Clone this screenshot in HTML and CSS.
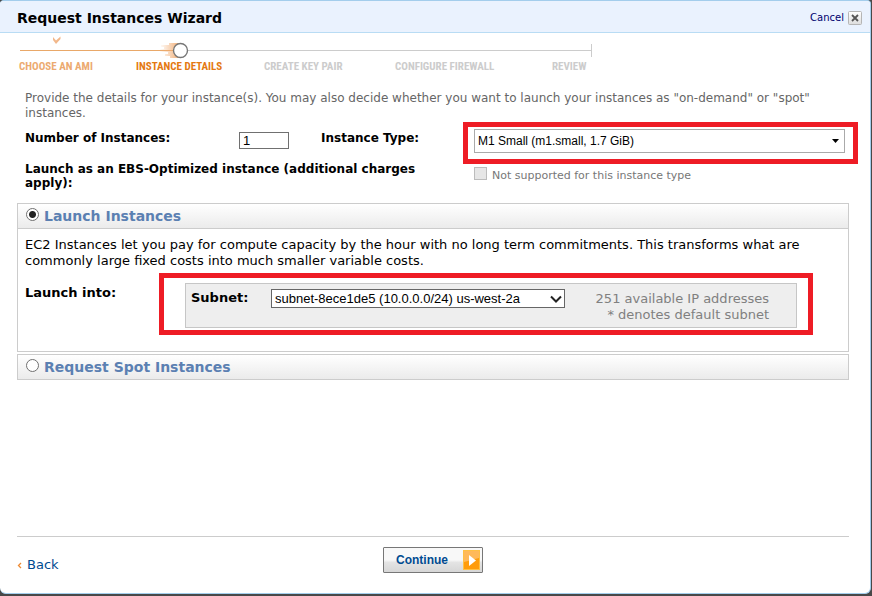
FILE: index.html
```html
<!DOCTYPE html>
<html lang="en">
<head>
<meta charset="utf-8">
<title>Request Instances Wizard</title>
<link rel="stylesheet" href="styles.css">
</head>
<body>
<form class="dialog">
  <header class="dialog-header">
    <h1>Request Instances Wizard</h1>
    <button type="button" class="cancel">Cancel
      <svg class="close-icon" width="14" height="14" viewBox="0 0 14 14" aria-hidden="true">
        <defs><linearGradient id="close-fill" x1="0" y1="0" x2="0" y2="1"><stop offset="0" stop-color="#fff"/><stop offset="1" stop-color="#ddd"/></linearGradient></defs>
        <rect x=".5" y=".5" width="13" height="13" rx="1" fill="url(#close-fill)" stroke="#b5b5b5"/>
        <path d="M4 4l6 6M10 4l-6 6" stroke="#555" stroke-width="1.8"/>
      </svg>
    </button>
  </header>

  <nav class="wizard" aria-label="Wizard steps">
    <svg class="track" width="576" height="26" viewBox="0 0 576 26" aria-hidden="true">
      <defs><linearGradient id="trail" gradientUnits="userSpaceOnUse" x1="140" y1="0" x2="162" y2="0"><stop offset="0" stop-color="#f3b27a" stop-opacity="0"/><stop offset="1" stop-color="#efa568"/></linearGradient></defs>
      <path d="M1 17.500h155" stroke="#e9a869"/>
      <path d="M161 17.500h412M572.500 11v13" stroke="#ccc"/>
      <path d="M34 4l3 3.500L41.500 3.500V6l-4.500 5-3-4z" fill="#f2b88b"/>
      <path d="M150 10h12v15h-11v-2h-5v-2h3v-2h-8v-3h4v-2h-3v-2h8z" fill="url(#trail)"/>
      <circle cx="161.500" cy="17.500" r="7" fill="#fff" stroke="#777" stroke-width="1.400"/>
    </svg>
    <ol class="steps">
      <li class="done">CHOOSE AN AMI</li>
      <li class="current" aria-current="step">INSTANCE DETAILS</li>
      <li>CREATE KEY PAIR</li>
      <li>CONFIGURE FIREWALL</li>
      <li>REVIEW</li>
    </ol>
  </nav>

  <main class="content">
    <p class="intro">Provide the details for your instance(s). You may also decide whether you want to launch your instances as "on-demand" or "spot" instances.</p>

    <div class="fields">
      <label class="label" for="count">Number of Instances:</label>
      <input class="count" id="count" type="text" value="1">
      <label class="label" for="type">Instance Type:</label>
      <div class="highlight type-highlight">
        <div class="select type-select">
          <select id="type"><option>M1 Small (m1.small, 1.7 GiB)</option></select>
          <svg width="7" height="4" viewBox="0 0 7 4" aria-hidden="true"><path d="M0 0h7L3.500 4z"/></svg>
        </div>
      </div>
      <label class="label ebs-label" for="ebs">Launch as an EBS-Optimized instance (additional charges apply):</label>
      <div class="ebs">
        <input id="ebs" type="checkbox" disabled>
        <span>Not supported for this instance type</span>
      </div>
    </div>

    <section class="panel">
      <h2><input type="radio" name="mode" id="launch" checked><label for="launch">Launch Instances</label></h2>
      <div class="panel-body">
        <p>EC2 Instances let you pay for compute capacity by the hour with no long term commitments. This transforms what are commonly large fixed costs into much smaller variable costs.</p>
        <div class="launch-into">
          <span class="label">Launch into:</span>
          <div class="highlight subnet-highlight">
            <div class="subnet">
              <label class="label" for="subnet">Subnet:</label>
              <div class="select subnet-select">
                <select id="subnet"><option>subnet-8ece1de5 (10.0.0.0/24) us-west-2a</option></select>
                <svg width="12" height="8" viewBox="0 0 12 8" aria-hidden="true"><path d="M1 1.500l5 5 5-5" fill="none" stroke="#222" stroke-width="2"/></svg>
              </div>
              <p class="note">251 available IP addresses<br>* denotes default subnet</p>
            </div>
          </div>
        </div>
      </div>
    </section>

    <section class="panel">
      <h2><input type="radio" name="mode" id="spot"><label for="spot">Request Spot Instances</label></h2>
    </section>
  </main>

  <footer class="dialog-footer">
    <a class="back" href="#"><svg width="5" height="7" viewBox="0 0 5 7" aria-hidden="true"><path d="M4 1l-2.500 2.500L4 6" fill="none" stroke="#ee8a32" stroke-width="1.300"/></svg>Back</a>
    <button type="button" class="continue">Continue
      <svg width="17" height="20" viewBox="0 0 17 20" aria-hidden="true">
        <rect width="17" height="20" fill="#ff9c0b"/>
        <path d="M1 1h15v7L1 12z" fill="#ffb95a"/>
        <rect x=".5" y=".5" width="16" height="19" fill="none" stroke="#ffc044"/>
        <path d="M6 5l7 5.500L6 16z" fill="#fff"/>
      </svg>
    </button>
  </footer>
</form>
</body>
</html>
```
FILE: styles.css
```css
* {
  box-sizing: border-box;
}

body {
  margin: 0;
  background: #484848;
  color: #000;
  font-family: Verdana, "DejaVu Sans", sans-serif;
  font-size: 12px;
  line-height: 16px;
}

h1, h2, p, ol {
  margin: 0;
  padding: 0;
}

button, input, select {
  margin: 0;
  font: inherit;
}

.dialog {
  display: flex;
  flex-direction: column;
  min-height: calc(100vh - 2px);
  margin-right: 1px;
  border: 1px solid #a3cdec;
  border-left: 0;
  border-radius: 4px 4px 6px 6px;
  background: #fff;
  overflow: hidden;
}

.dialog-header {
  display: flex;
  align-items: center;
  justify-content: space-between;
  height: 32px;
  padding: 2px 8px 0 17px;
  border-bottom: 1px solid #b9dcf4;
  background: #eaf2fe;
}

h1 {
  font-size: 14px;
}

.cancel {
  display: flex;
  align-items: center;
  gap: 4px;
  padding: 0;
  border: 0;
  background: none;
  color: #00006e;
  font-size: 10px;
}

.wizard {
  padding: 0 19px;
}

.track {
  display: block;
}

.steps {
  display: grid;
  grid-template-columns: 117px 128px 131px 157px auto;
  list-style: none;
  color: #ccc;
  font: bold 11px/16px "Roboto Condensed", "Open Sans Condensed", Roboto, sans-serif;
  white-space: nowrap;
}

.done {
  color: #ecaa70;
}

.current {
  color: #e47911;
}

.content {
  flex: 1;
  padding: 16px 12px 0 17px;
}

.intro {
  padding: 0 32px 0 8px;
  color: #666;
  line-height: 15px;
}

.label {
  font-weight: bold;
}

.fields {
  display: grid;
  grid-template-columns: 214px 82px 142px 1fr;
  padding: 1px 0 0 8px;
}

.fields > .label {
  margin-top: 9px;
  line-height: 14px;
}

.count {
  width: 50px;
  height: 17px;
  margin-top: 10px;
  padding: 0 3px;
  border: 1px solid #707070;
  font-family: "Liberation Sans", sans-serif;
  font-size: 13px;
}

.highlight {
  border: 5px solid #ee1c25;
}

.type-highlight {
  padding: 2px 8px 6px 6px;
}

.select {
  position: relative;
  display: flex;
}

.select select {
  width: 100%;
  padding: 0 3px;
  appearance: none;
  border: 1px solid #aaa;
  border-radius: 0;
  background: #fff;
  color: #000;
  font-family: "Liberation Sans", sans-serif;
}

.select svg {
  position: absolute;
  top: 50%;
  transform: translateY(-50%);
  pointer-events: none;
}

.type-select select {
  height: 24px;
  font-size: 12px;
}

.type-select svg {
  right: 6px;
}

.fields > .ebs-label {
  grid-column: span 3;
  margin-top: -2px;
  padding-right: 20px;
}

.ebs {
  display: flex;
  gap: 5px;
  padding: 3px 11px;
  color: #777;
  font-size: 11px;
  line-height: 18px;
}

.ebs input {
  width: 13px;
  height: 13px;
  appearance: none;
  border: 1px solid #bcbcbc;
  background: #e6e6e6;
}

.panel {
  margin: 0 9px 2px 0;
  border: 1px solid #ccc;
}

.fields + .panel {
  margin-top: 13px;
}

.panel h2 {
  display: flex;
  align-items: center;
  gap: 5px;
  height: 24px;
  padding-left: 8px;
  background: linear-gradient(#fff, #ebebeb);
  color: #5b80b2;
  font-size: 14px;
}

.panel h2 input {
  width: 13px;
  height: 13px;
  margin-bottom: 3px;
  appearance: none;
  border: 1px solid #707070;
  border-radius: 50%;
  background: #fff;
}

.panel h2 input:checked {
  background: radial-gradient(circle, #222 3px, #fff 4px);
}

.panel-body {
  padding: 8px 35px 16px 7px;
  border-top: 1px solid #ccc;
  font-size: 13px;
}

.launch-into {
  display: grid;
  grid-template-columns: 134px 1fr;
  margin-top: 4px;
}

.launch-into > .label {
  margin-top: 12px;
}

.subnet-highlight {
  padding: 5px 11px 2px 21px;
}

.subnet {
  display: grid;
  grid-template-columns: 80px 294px 1fr;
  padding: 5px 27px 4px 5px;
  border: 1px solid #c6c6c6;
  background: #eee;
}

.subnet .label {
  line-height: 18px;
}

.subnet-select {
  align-items: flex-start;
  height: 19px;
}

.subnet-select select {
  height: 19px;
  border-color: #666;
  font-size: 13px;
  line-height: 17px;
}

.subnet-select svg {
  right: 3px;
}

.note {
  padding-top: 2px;
  color: #808080;
  text-align: right;
  white-space: nowrap;
}

.dialog-footer {
  display: grid;
  grid-template-columns: 1fr auto 1fr;
  align-items: center;
  margin: 0 21px 0 17px;
  padding: 10px 0 20px;
  border-top: 1px solid #ccc;
}

.back {
  display: flex;
  align-items: center;
  gap: 5px;
  padding-top: 10px;
  color: #004b91;
  font-size: 13px;
  text-decoration: none;
}

.continue {
  display: flex;
  align-items: center;
  justify-content: space-between;
  width: 100px;
  height: 26px;
  padding: 0 2px 0 12px;
  border: 1px solid #777;
  border-radius: 1px;
  background: linear-gradient(#f8f8f8 0 50%, #e4e4e4 60%, #d6d6d6);
  color: #004b91;
  font: bold 12px/14px "Liberation Sans", sans-serif;
}
```
